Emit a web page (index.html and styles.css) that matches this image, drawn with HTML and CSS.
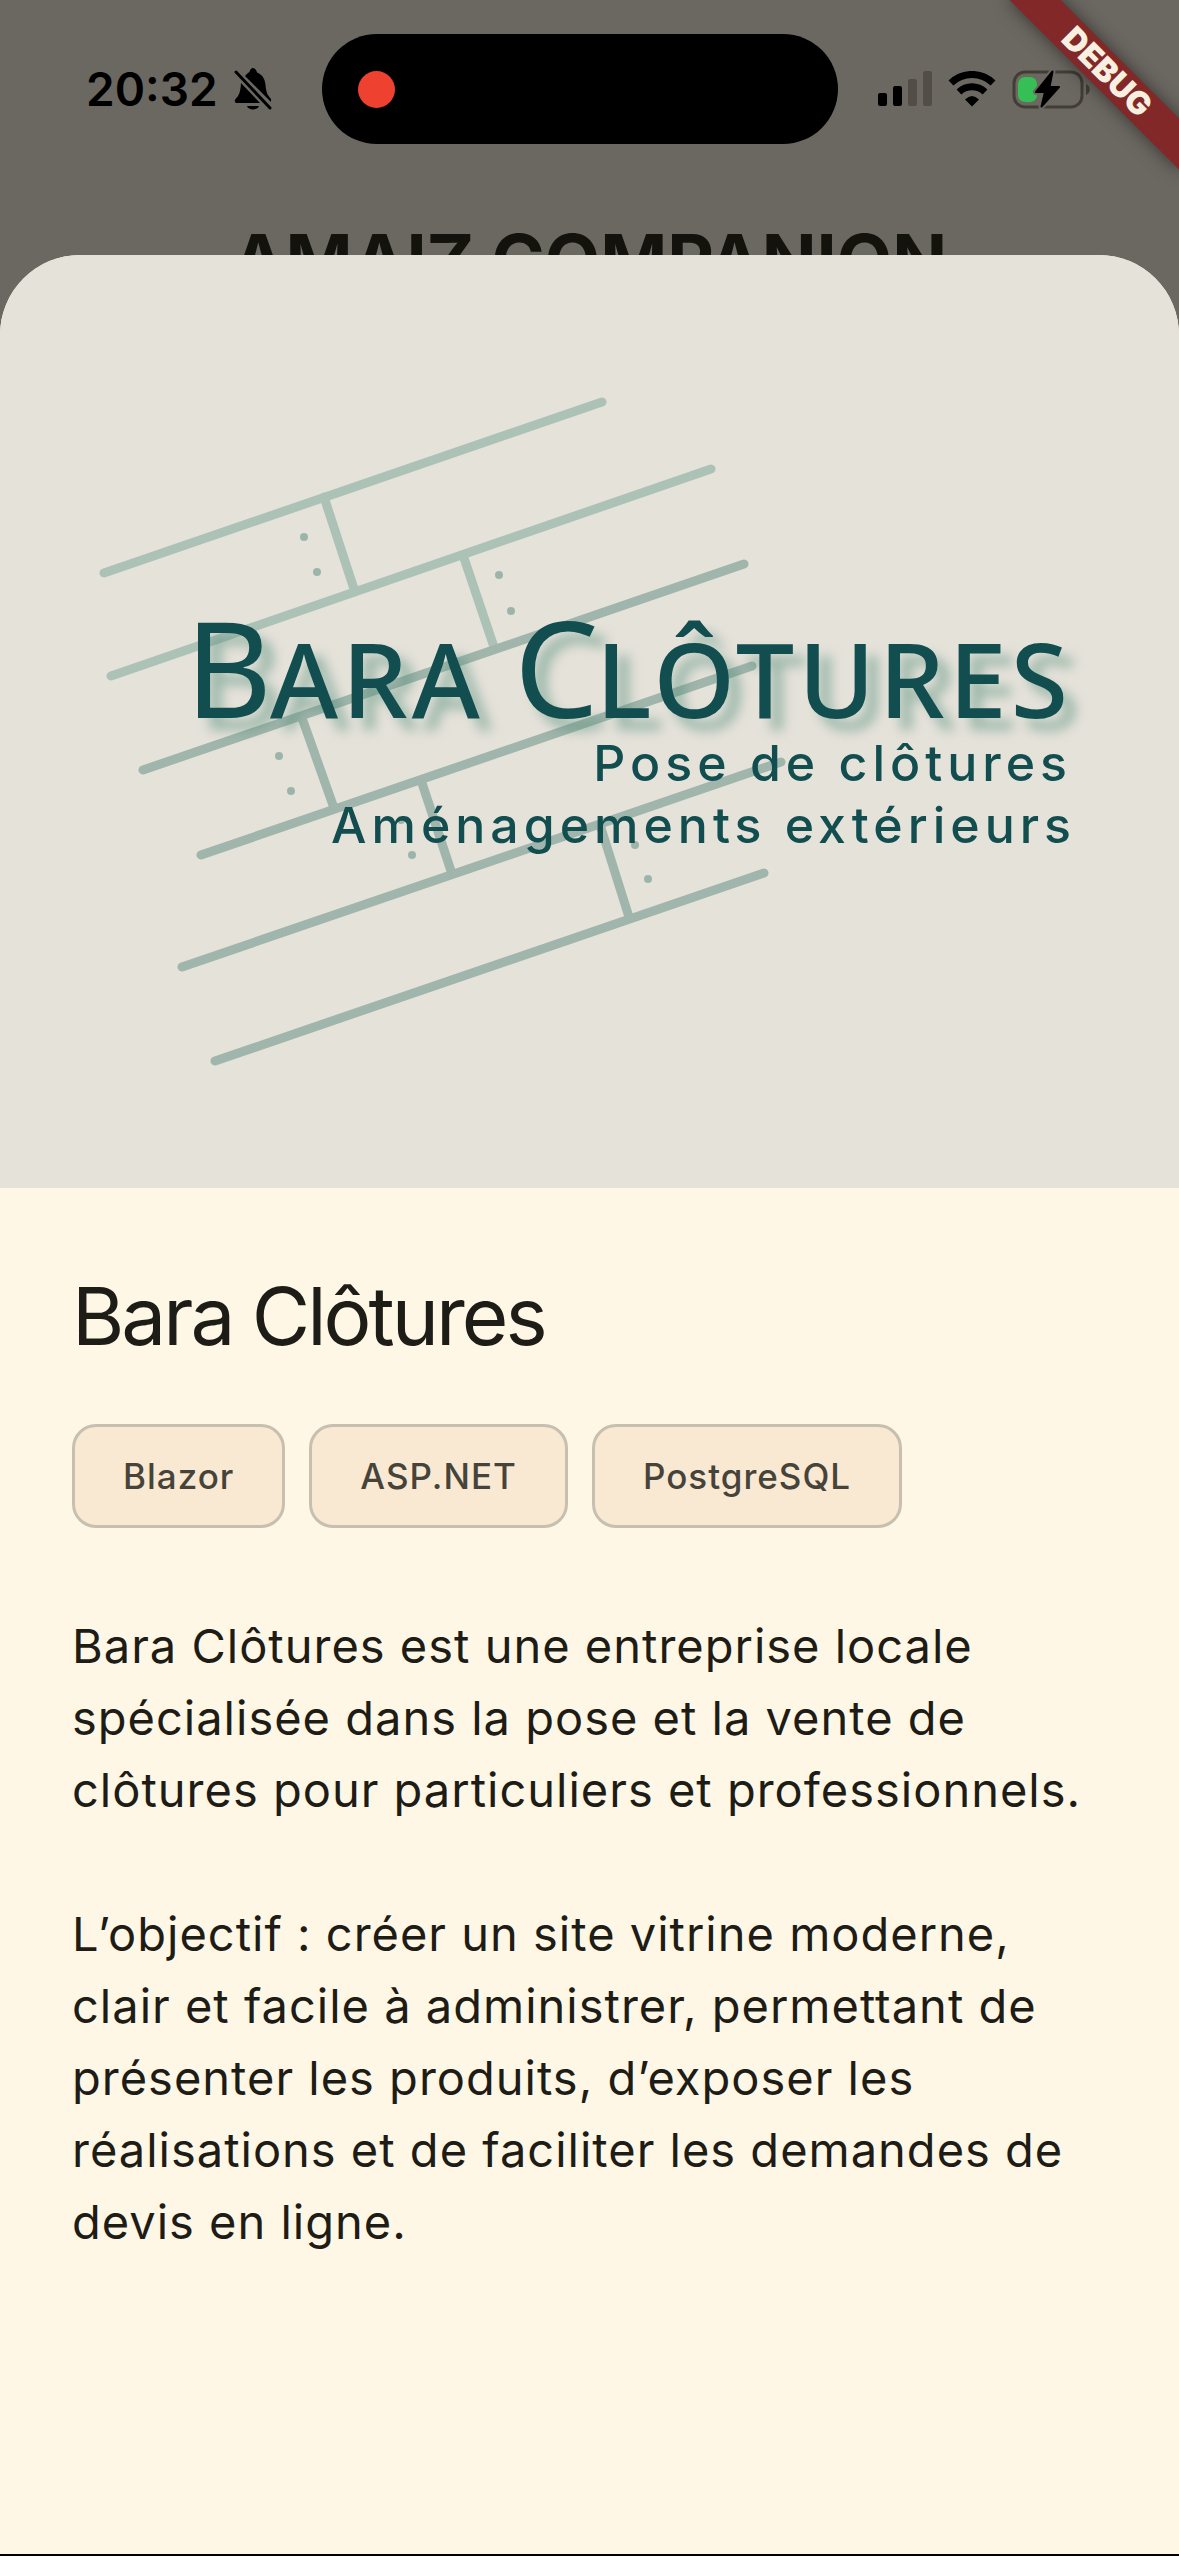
FILE: index.html
```html
<!DOCTYPE html>
<html lang="fr">
<head>
    <meta charset="UTF-8">
    <meta name="viewport" content="width=device-width, initial-scale=1.0">
    <title>Amaiz Companion - Bara Clôtures</title>
    <link rel="stylesheet" href="styles.css">
</head>
<body>
    <div class="app">
        <div class="status-bar">
            <div class="status-left">
                <span class="time">20:32</span>
                <svg class="bell" viewBox="0 0 38 42" aria-hidden="true">
                    <path d="M11 8C13 5.500 14.500 4.500 15.500 4C16 1.500 17.500 0 19 0C20.500 0 22.500 2 23 4.500C28 6.500 31 10.500 31.500 17C32 24 33.500 27 37 31V34Z"/>
                    <path d="M7 15L26 35H3C1 35 0 33 1.500 31C4.500 28 6.500 25 7 15Z"/>
                    <path d="M13 38H25C24 42.500 14 42.500 13 38Z"/>
                    <path class="slash" d="M2 4L36 40"/>
                </svg>
            </div>
            <div class="island"><span class="record-dot"></span></div>
            <div class="status-right">
                <svg class="signal" viewBox="0 0 54 36" aria-hidden="true">
                    <rect x="0" y="22" width="9" height="13" rx="2"/>
                    <rect x="15" y="15" width="9" height="20" rx="2"/>
                    <rect class="off" x="30" y="8" width="9" height="27" rx="2"/>
                    <rect class="off" x="45" y="0" width="9" height="35" rx="2"/>
                </svg>
                <svg class="wifi" viewBox="0 0 48 36" aria-hidden="true">
                    <path class="arc" d="M3 12A30 30 0 0 1 45 12"/>
                    <path class="arc" d="M11 21A19 19 0 0 1 37 21"/>
                    <path d="M24 35.500L17 28.500Q24 21.500 31 28.500Z"/>
                </svg>
                <svg class="battery" viewBox="0 0 79 40" aria-hidden="true">
                    <rect class="case" x="2" y="3" width="68" height="35" rx="11"/>
                    <path class="tip" d="M74 15C79 17 79 24 74 26Z"/>
                    <rect class="charge" x="6" y="8" width="19" height="25" rx="7"/>
                    <path class="bolt-gap" d="M40.500 2.500L24 23H33L29.500 37.500L47 18H37.500Z"/>
                    <path class="bolt" d="M40.500 2.500L24 23H33L29.500 37.500L47 18H37.500Z"/>
                </svg>
            </div>
        </div>
        <h1 class="app-title">AMAIZ COMPANION</h1>

        <main class="sheet">
            <svg class="banner" viewBox="0 255 1179 933" role="img" aria-label="Bara Clôtures, pose de clôtures, aménagements extérieurs">
                <!-- fence boards -->
                <g class="boards light">
                    <path d="M104 573L602 402M111 676L711 469M324 497L355 592M463 555L494 647"/>
                </g>
                <g class="boards">
                    <path d="M143 770L744 564M201 855L752 666M182 967L781 762M215 1061L764 873"/>
                    <path d="M302 718L334 808M421 780L452 874M601 828L629 917"/>
                </g>
                <g class="screws">
                    <circle cx="304" cy="537" r="4"/>
                    <circle cx="317" cy="572" r="4"/>
                    <circle cx="499" cy="575" r="4"/>
                    <circle cx="511" cy="611" r="4"/>
                    <circle cx="279" cy="756" r="4"/>
                    <circle cx="291" cy="791" r="4"/>
                    <circle cx="401" cy="820" r="4"/>
                    <circle cx="412" cy="855" r="4"/>
                    <circle cx="635" cy="845" r="4"/>
                    <circle cx="648" cy="879" r="4"/>
                </g>
                <text class="brand" y="718"><tspan x="185">B</tspan><tspan class="small" x="270">ARA</tspan> <tspan x="514">C</tspan><tspan class="small" x="596">LÔTURES</tspan></text>
                <text class="tagline" x="1072" y="781">Pose de clôtures</text>
                <text class="tagline" x="1076" y="843">Aménagements extérieurs</text>
            </svg>

            <section class="details">
                <h2>Bara Clôtures</h2>
                <ul class="tags">
                    <li>Blazor</li>
                    <li>ASP.NET</li>
                    <li>PostgreSQL</li>
                </ul>
                <p>Bara Clôtures est une entreprise locale spécialisée dans la pose et la vente de clôtures pour particuliers et professionnels.</p>
                <p>L’objectif : créer un site vitrine moderne, clair et facile à administrer, permettant de présenter les produits, d’exposer les réalisations et de faciliter les demandes de devis en ligne.</p>
            </section>
        </main>

        <div class="debug-ribbon">DEBUG</div>
    </div>
</body>
</html>
```

FILE: styles.css
```css
* {
    box-sizing: border-box;
}

body {
    margin: 0;
    font-family: Inter, "Liberation Sans", sans-serif;
    background-color: #6b6862;
    color: #1e1c16;
}

.app {
    position: relative;
    display: flex;
    flex-direction: column;
    min-height: 100vh;
    overflow: hidden;
    border-bottom: 2px solid #000;
}

/* Status bar */
.status-bar {
    display: grid;
    grid-template-columns: 1fr 516px 1fr;
    align-items: center;
    padding: 34px 88px 0 68px;
    color: #000;
}

.status-left,
.status-right {
    display: flex;
    align-items: center;
}

.status-left {
    gap: 16px;
    padding-left: 18px;
}

.status-right {
    justify-content: flex-end;
    gap: 16px;
}

.time {
    font-size: 46px;
    line-height: 56px;
    font-weight: 600;
}

.bell {
    width: 38px;
    height: 42px;
}

.bell .slash {
    fill: none;
    stroke: #000;
    stroke-width: 3;
    stroke-linecap: round;
}

.island {
    display: flex;
    align-items: center;
    height: 110px;
    padding-left: 36px;
    border-radius: 55px;
    background-color: #000;
}

.record-dot {
    width: 37px;
    height: 37px;
    border-radius: 50%;
    background-color: #ee4130;
}

.signal {
    width: 54px;
    height: 36px;
}

.signal .off {
    fill: #524e47;
}

.wifi {
    width: 48px;
    height: 36px;
}

.wifi .arc {
    fill: none;
    stroke: #000;
    stroke-width: 7;
}

.battery {
    width: 79px;
    height: 40px;
}

.battery .case {
    fill: none;
    stroke: #423e35;
    stroke-width: 3;
}

.battery .tip {
    fill: #423e35;
}

.battery .charge {
    fill: #36bf55;
}

.battery .bolt-gap {
    stroke: #6b6862;
    stroke-width: 6;
    stroke-linejoin: round;
}

.battery .bolt {
    stroke: #000;
    stroke-width: 2;
    stroke-linejoin: round;
}

.app-title {
    margin: 74px 0 0;
    font-size: 72px;
    line-height: 84px;
    font-weight: 700;
    text-align: center;
    color: #13120c;
}

/* Bottom sheet */
.sheet {
    flex: 1;
    position: relative;
    margin-top: -47px;
    border-radius: 80px 80px 0 0;
    overflow: hidden;
    background-color: #fff7e5;
}

.banner {
    display: block;
    width: 100%;
    background-color: #e5e2da;
}

.boards {
    fill: none;
    stroke: #a0b5ab;
    stroke-width: 9;
    stroke-linecap: round;
}

.boards.light {
    stroke: #adc2b7;
}

.screws {
    fill: #9cb5aa;
}

.brand {
    font-family: "Noto Sans", sans-serif;
    font-size: 134px;
    font-weight: 400;
    fill: #124e50;
    filter: drop-shadow(12px 12px 6px rgba(80, 140, 120, 0.5));
}

.brand .small {
    font-size: 104px;
    font-weight: 500;
    letter-spacing: 4px;
}

.tagline {
    font-size: 50px;
    font-weight: 500;
    letter-spacing: 5px;
    text-anchor: end;
    fill: #124e50;
}

.details {
    padding: 74px 72px 72px;
}

.details h2 {
    margin: 0 0 54px;
    font-size: 80px;
    line-height: 108px;
    font-weight: 400;
    letter-spacing: -3px;
}

.tags {
    display: flex;
    flex-wrap: wrap;
    gap: 24px;
    margin: 0 0 82px;
    padding: 0;
    list-style: none;
}

.tags li {
    padding: 24px 48px;
    border: 3px solid #c7bfb0;
    border-radius: 24px;
    background-color: #f9e9d2;
    font-size: 35px;
    line-height: 50px;
    font-weight: 500;
    letter-spacing: 1px;
    color: #46443a;
}

.details p {
    margin: 0 0 72px;
    font-size: 47px;
    line-height: 72px;
    letter-spacing: 1px;
}

.debug-ribbon {
    position: absolute;
    top: 54px;
    right: -48px;
    width: 240px;
    font-size: 32px;
    line-height: 36px;
    font-weight: 900;
    text-align: center;
    color: #f7f0e0;
    background-color: #822828;
    box-shadow: 0 0 18px rgba(0, 0, 0, 0.5);
    transform: rotate(45deg);
}
```
